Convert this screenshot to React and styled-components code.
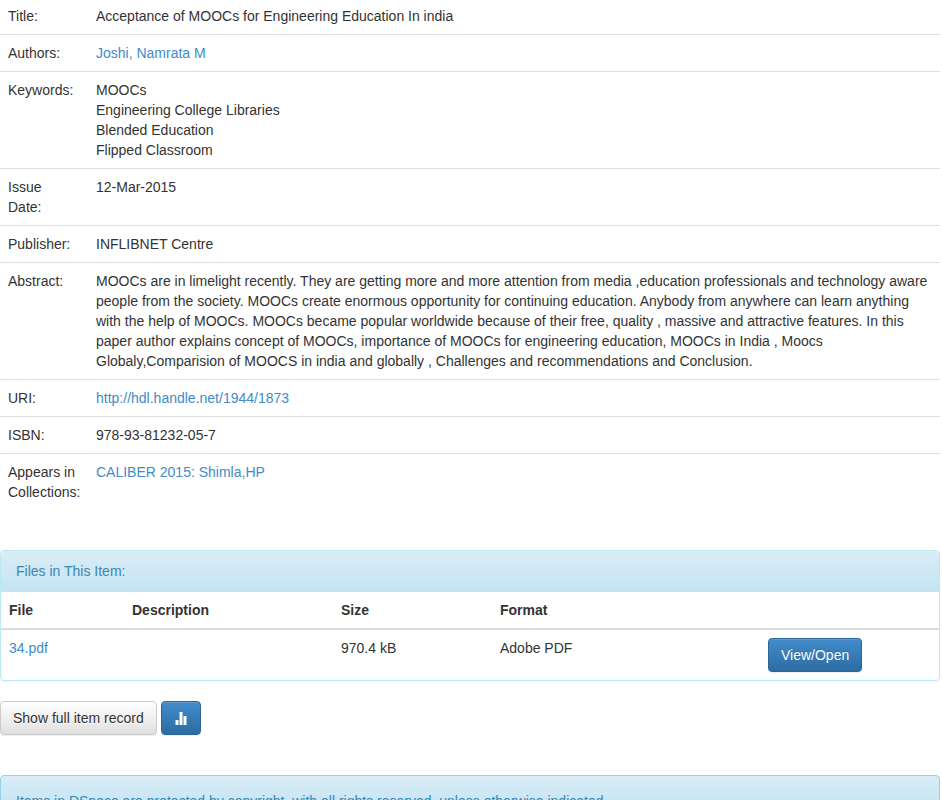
import React from "react";
import styled, { createGlobalStyle } from "styled-components";

const Global = createGlobalStyle`
  html, body {
    margin: 0;
    height: 800px;
    overflow: hidden;
    background: #fff;
  }
  body {
    font-family: "Liberation Sans", Arial, sans-serif;
    font-size: 14px;
    line-height: 20px;
    color: #333;
  }
`;

const Page = styled.div`
  width: 940px;
`;

const MetaTable = styled.table`
  width: 100%;
  border-collapse: collapse;
  border-spacing: 0;
  table-layout: fixed;
  margin-bottom: 40px;
`;

const MetaRow = styled.tr`
  &:not(:first-child) > * {
    border-top: 1px solid #ddd;
  }
  &:first-child > * {
    padding-top: 6px;
  }
`;

const Label = styled.td`
  width: 72px;
  padding: 8px;
  vertical-align: top;
`;

const Value = styled.td`
  padding: 8px;
  vertical-align: top;
`;

const Link = styled.a`
  color: #428bca;
  text-decoration: none;
`;

const Line = styled.div``;

const Panel = styled.section`
  border: 1px solid #bce8f1;
  border-radius: 4px;
  box-shadow: 0 1px 2px rgba(0, 0, 0, 0.05);
  margin-bottom: 20px;
  overflow: hidden;
`;

const PanelHeading = styled.div`
  padding: 10px 15px 11px;
  color: #3a87ad;
  background: linear-gradient(to bottom, #d9edf7 0, #c4e3f3 100%);
`;

const FileTable = styled.table`
  width: 100%;
  border-collapse: collapse;
  table-layout: fixed;
`;

const Head = styled.th`
  width: ${(p) => p.$w}px;
  padding: 8px;
  text-align: left;
  font-weight: 700;
  border-bottom: 2px solid #ddd;
`;

const Cell = styled.td`
  padding: 8px;
  vertical-align: top;
`;

const Btn = styled.a`
  display: inline-block;
  box-sizing: border-box;
  padding: 6px 12px;
  border: 1px solid transparent;
  border-radius: 4px;
  font-size: 14px;
  line-height: 20px;
  text-decoration: none;
  box-shadow: inset 0 1px 0 rgba(255, 255, 255, 0.15), 0 1px 1px rgba(0, 0, 0, 0.075);
`;

const PrimaryBtn = styled(Btn)`
  color: #fff;
  text-shadow: 0 -1px 0 rgba(0, 0, 0, 0.2);
  background: linear-gradient(to bottom, #428bca 0, #2d6ca2 100%);
  border-color: #2b669a;
`;

const DefaultBtn = styled(Btn)`
  color: #333;
  text-shadow: 0 1px 0 #fff;
  background: linear-gradient(to bottom, #fff 0, #e0e0e0 100%);
  border-color: #ccc;
`;

const Actions = styled.div`
  display: flex;
  gap: 4px;
  margin-bottom: 40px;
`;

const StatsBtn = styled(PrimaryBtn)`
  display: flex;
  align-items: center;
  justify-content: center;
  width: 40px;
  height: 34px;
  padding: 0;
`;

const Notice = styled.div`
  padding: 15px;
  color: #3a87ad;
  background: linear-gradient(to bottom, #d9edf7 0, #b9def0 100%);
  border: 1px solid #9acfea;
  border-radius: 4px;
`;

function StatsIcon() {
  return (
    <svg width="14" height="14" viewBox="0 0 14 14" fill="#fff">
      <rect x="1.5" y="9" width="3" height="5" rx="0.5" />
      <rect x="5.5" y="1" width="3" height="13" rx="0.5" />
      <rect x="9.5" y="5" width="3" height="9" rx="0.5" />
    </svg>
  );
}

export default function App() {
  return (
    <Page>
      <Global />
      <MetaTable>
        <tbody>
          <MetaRow>
            <Label>Title:</Label>
            <Value>Acceptance of MOOCs for Engineering Education In india</Value>
          </MetaRow>
          <MetaRow>
            <Label>Authors:</Label>
            <Value><Link href="#">Joshi, Namrata M</Link></Value>
          </MetaRow>
          <MetaRow>
            <Label>Keywords:</Label>
            <Value>
              <Line>MOOCs</Line>
              <Line>Engineering College Libraries</Line>
              <Line>Blended Education</Line>
              <Line>Flipped Classroom</Line>
            </Value>
          </MetaRow>
          <MetaRow>
            <Label>
              <Line>Issue</Line>
              <Line>Date:</Line>
            </Label>
            <Value>12-Mar-2015</Value>
          </MetaRow>
          <MetaRow>
            <Label>Publisher:</Label>
            <Value>INFLIBNET Centre</Value>
          </MetaRow>
          <MetaRow>
            <Label>Abstract:</Label>
            <Value>
              MOOCs are in limelight recently. They are getting more and more attention from media ,education professionals and technology aware people from the society. MOOCs create enormous opportunity for continuing education. Anybody from anywhere can learn anything with the help of MOOCs. MOOCs became popular worldwide because of their free, quality , massive and attractive features. In this paper author explains concept of MOOCs, importance of MOOCs for engineering education, MOOCs in India , Moocs Globaly,Comparision of MOOCS in india and globally , Challenges and recommendations and Conclusion.
            </Value>
          </MetaRow>
          <MetaRow>
            <Label>URI:</Label>
            <Value><Link href="#">http://hdl.handle.net/1944/1873</Link></Value>
          </MetaRow>
          <MetaRow>
            <Label>ISBN:</Label>
            <Value>978-93-81232-05-7</Value>
          </MetaRow>
          <MetaRow>
            <Label>Appears in Collections:</Label>
            <Value><Link href="#">CALIBER 2015: Shimla,HP</Link></Value>
          </MetaRow>
        </tbody>
      </MetaTable>

      <Panel>
        <PanelHeading>Files in This Item:</PanelHeading>
        <FileTable>
          <thead>
            <tr>
              <Head $w={107}>File</Head>
              <Head $w={193}>Description</Head>
              <Head $w={143}>Size</Head>
              <Head $w={252}>Format</Head>
              <Head />
            </tr>
          </thead>
          <tbody>
            <tr>
              <Cell><Link href="#">34.pdf</Link></Cell>
              <Cell />
              <Cell>970.4 kB</Cell>
              <Cell>Adobe PDF</Cell>
              <Cell><PrimaryBtn href="#">View/Open</PrimaryBtn></Cell>
            </tr>
          </tbody>
        </FileTable>
      </Panel>

      <Actions>
        <DefaultBtn href="#">Show full item record</DefaultBtn>
        <StatsBtn href="#"><StatsIcon /></StatsBtn>
      </Actions>

      <Notice>Items in DSpace are protected by copyright, with all rights reserved, unless otherwise indicated.</Notice>
    </Page>
  );
}
